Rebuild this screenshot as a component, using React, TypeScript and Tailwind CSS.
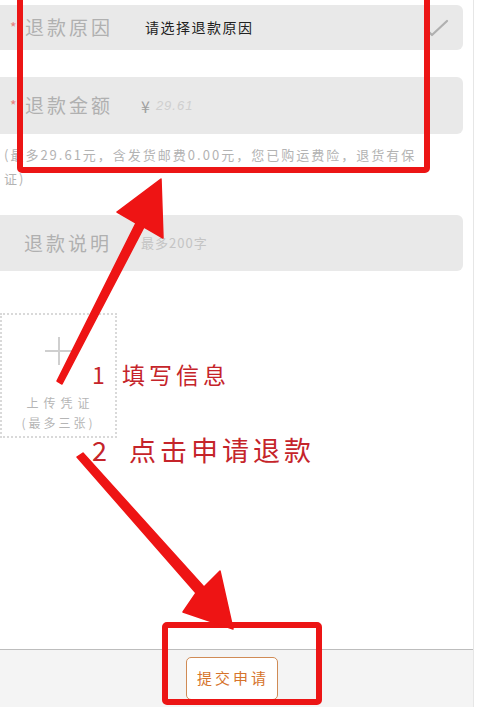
import React from "react";

const cjk = { fontFamily: '"Noto Sans CJK SC", "Noto Sans", sans-serif' };

function Check() {
  return (
    <svg width="26" height="18" viewBox="0 0 26 18" fill="none">
      <path d="M2 9 L9 16 L24 2" stroke="#b0b0b0" strokeWidth="2.2" strokeLinecap="round" strokeLinejoin="round" />
    </svg>
  );
}

export default function App() {
  return (
    <div className="relative w-[479px] h-[716px] bg-white overflow-hidden" style={cjk}>
      <div className="flex flex-col w-[474px] h-[707px] border-r border-[#e6e6e6]">
        <div className="pt-[5px]" />
        {/* 退款原因 */}
        <div className="flex items-center h-[45px] w-[463px] bg-[#e9e9e9] rounded-r-md pl-[10px] pr-[14px]">
          <span className="text-[#e58080] text-[14px] w-[15px]">*</span>
          <span className="text-[19px] tracking-[3px] text-[#b0b0b0] w-[120px]">退款原因</span>
          <span className="text-[14px] tracking-[1.5px] text-[#222]">请选择退款原因</span>
          <span className="ml-auto"><Check /></span>
        </div>
        {/* 退款金额 */}
        <div className="mt-[27px] flex items-center h-[57px] w-[463px] bg-[#e9e9e9] rounded-r-md pl-[10px]">
          <span className="text-[#e58080] text-[14px] w-[15px]">*</span>
          <span className="text-[19px] tracking-[3px] text-[#b0b0b0] w-[116px]">退款金额</span>
          <span className="text-[16px] text-[#a0a0a0]">¥</span>
          <span className="ml-[6px] text-[13px] italic text-[#cfcfcf] tracking-[1px]" style={{ fontFamily: '"Liberation Sans", sans-serif' }}>29.61</span>
        </div>
        {/* note */}
        <div className="mt-[9px] pl-[4px] text-[13px] leading-[24px] tracking-[2px] text-[#b3b3b3] whitespace-nowrap">
          (最多29.61元，含发货邮费0.00元，您已购运费险，退货有保
          <br />
          证)
        </div>
        {/* 退款说明 */}
        <div className="mt-[24px] flex items-center h-[56px] w-[463px] bg-[#e9e9e9] rounded-r-md pl-[24px]">
          <span className="text-[19px] tracking-[3px] text-[#b0b0b0] w-[117px]">退款说明</span>
          <span className="text-[13px] tracking-[1px] text-[#c4c4c4]">最多200字</span>
        </div>
        {/* upload */}
        <div className="mt-[42px] w-[117px] h-[125px] border-2 border-dotted border-[#d9d9d9] flex flex-col items-center">
          <div className="relative mt-[22px] w-[28px] h-[28px]">
            <div className="absolute left-0 right-0 top-[13px] h-[2px] bg-[#cfcfcf]" />
            <div className="absolute top-0 bottom-0 left-[13px] w-[2px] bg-[#cfcfcf]" />
          </div>
          <div className="mt-[28px] text-[12px] tracking-[5px] text-[#b5b5b5] leading-[20px] pl-[4px]">上传凭证</div>
          <div className="text-[12px] tracking-[3px] text-[#b5b5b5] leading-[20px]">(最多三张)</div>
        </div>
        <div className="flex-1" />
        {/* bottom bar */}
        <div className="h-[58px] border-t border-[#bdbdbd] bg-[#f4f4f4] flex items-center justify-center pr-[10px]">
          <div className="w-[92px] h-[43px] rounded-[5px] border border-[#d08b55] bg-white flex items-center justify-center text-[15px] tracking-[3px] text-[#d6742c] pl-[3px]">
            提交申请
          </div>
        </div>
      </div>

      {/* annotations */}
      <svg className="absolute inset-0 pointer-events-none" width="479" height="716" viewBox="0 0 479 716">
        <rect x="20" y="-6" width="407" height="176" rx="2" fill="none" stroke="#ec1515" strokeWidth="6" />
        <rect x="165" y="625" width="154" height="77" rx="2" fill="none" stroke="#ec1515" strokeWidth="6" />
        <polygon points="57,381 136,223 117,212 161,179 163,238 144,227 62,384" fill="#ee1414" stroke="#ee1414" strokeWidth="1.5" strokeLinejoin="round" />
        <polygon points="77,457 83,453 204,587 220,571 233,629 183,612 196,593" fill="#ee1414" stroke="#ee1414" strokeWidth="1.5" strokeLinejoin="round" />
      </svg>
      <div className="absolute left-[92px] top-[357px] flex items-center text-[#c5242a] text-[23px] tracking-[4px] whitespace-nowrap">
        <span className="w-[30px]">1</span>
        <span>填写信息</span>
      </div>
      <div className="absolute left-[92px] top-[430px] flex items-center text-[#c5242a] text-[27px] tracking-[4px] whitespace-nowrap">
        <span className="w-[37px]">2</span>
        <span>点击申请退款</span>
      </div>
    </div>
  );
}
